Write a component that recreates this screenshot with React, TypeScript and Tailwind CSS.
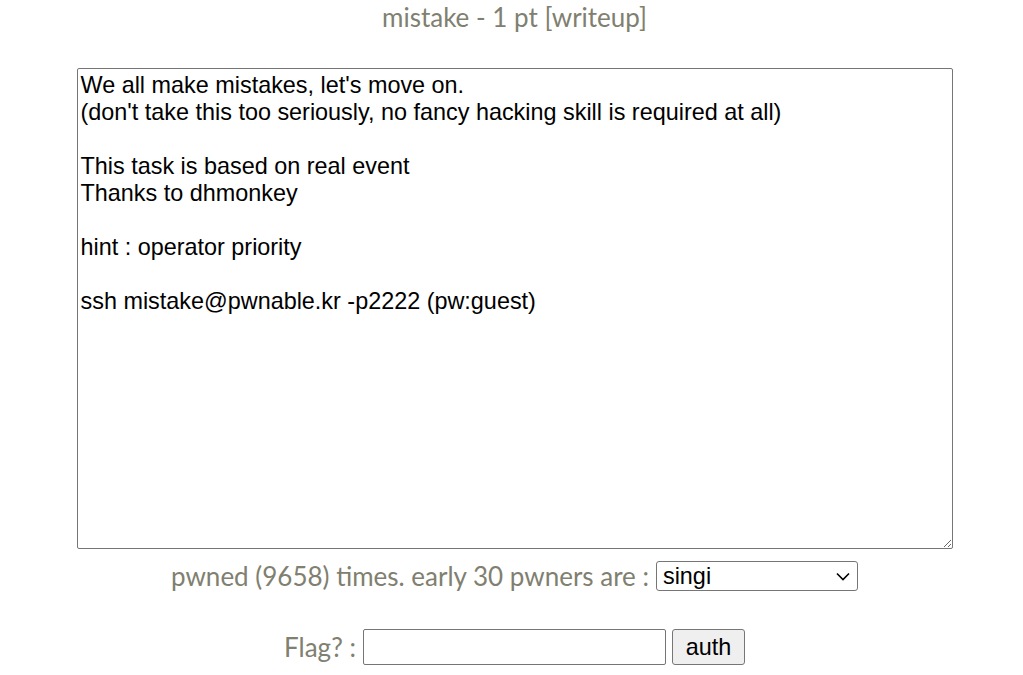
import React from 'react';

const body = `We all make mistakes, let's move on.
(don't take this too seriously, no fancy hacking skill is required at all)

This task is based on real event
Thanks to dhmonkey

hint : operator priority

ssh mistake@pwnable.kr -p2222 (pw:guest)`;

export default function App() {
  return (
    <div className="min-h-[675px] bg-white pl-[6px] font-['Lato',sans-serif] text-[#7f8070]">
      <div className="flex flex-col items-center">
        {/* Title */}
        <div className="mt-[2px] h-[30px] text-[26px] leading-[30px]">mistake - 1 pt [writeup]</div>

        {/* Description */}
        <textarea
          readOnly
          defaultValue={body}
          className="mt-[36px] h-[481px] w-[876px] resize rounded-[2px] border border-[#767676] px-[3px] py-[3px] font-['Liberation_Sans',Arial,sans-serif] text-[23.4px] leading-[27px] text-black outline-none"
        />

        {/* Pwners */}
        <div className="mt-[12px] flex items-center gap-[7px]">
          <span className="text-[26px] leading-[30px]">pwned (9658) times. early 30 pwners are :</span>
          <div className="relative flex">
            <select className="h-[30px] w-[202px] appearance-none rounded-[3px] border border-[#767676] bg-white py-0 pl-[6px] font-['Liberation_Sans',Arial,sans-serif] text-[23.4px] leading-[26px] text-black outline-none">
              <option>singi</option>
            </select>
            <svg
              className="pointer-events-none absolute right-[8px] top-[11px]"
              width="14"
              height="9"
              viewBox="0 0 14 9"
              fill="none"
              stroke="black"
              strokeWidth="1.6"
            >
              <path d="M1 1.5 L7 7.5 L13 1.5" />
            </svg>
          </div>
        </div>

        {/* Flag */}
        <div className="mt-[38px] flex items-center">
          <span className="mr-[7px] text-[26px] leading-[30px]">Flag? :</span>
          <input
            type="text"
            className="h-[36px] w-[303px] rounded-[2px] border border-[#767676] bg-white px-[4px] font-['Liberation_Sans',Arial,sans-serif] text-[23.4px] text-black outline-none"
          />
          <button className="ml-[6px] h-[36px] w-[73px] rounded-[3px] border border-[#767676] bg-[#efefef] font-['Liberation_Sans',Arial,sans-serif] text-[23.4px] text-black">
            auth
          </button>
        </div>
      </div>
    </div>
  );
}
